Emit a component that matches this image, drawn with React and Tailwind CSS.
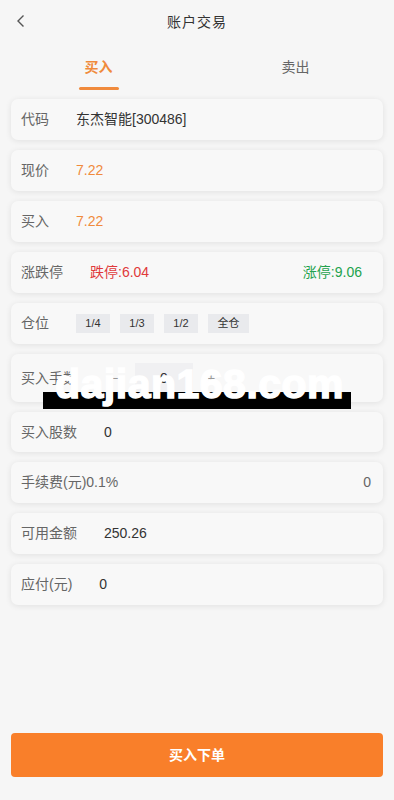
import React from "react";

const font = { fontFamily: '"Liberation Sans", "Noto Sans CJK SC", sans-serif' };

function Card({ children, className = "" }) {
  return (
    <div className={`flex items-center rounded-[7px] bg-[#f8f8f8] px-[10px] shadow-[0_1px_6px_rgba(0,0,0,0.09)] ${className}`}>
      {children}
    </div>
  );
}

function Label({ children, mr = true }) {
  return <span className={`text-[14px] text-[#666] ${mr ? "mr-[27px]" : ""}`}>{children}</span>;
}

export default function App() {
  return (
    <div style={font} className="relative flex min-h-[800px] w-[394px] flex-col bg-[#f6f6f6]">
      {/* header */}
      <div className="relative flex h-[44px] items-center justify-center">
        <svg className="absolute left-[15px] top-[14px]" width="12" height="14" viewBox="0 0 12 14">
          <path d="M8.5 1.5 L3 7 L8.5 12.5" fill="none" stroke="#555" strokeWidth="1.4" />
        </svg>
        <span className="text-[14px] tracking-[1px] text-[#333]">账户交易</span>
      </div>
      {/* tabs */}
      <div className="flex h-[47px]">
        <div className="flex flex-1 flex-col items-center">
          <span className="mt-[13px] text-[14px] font-bold text-[#f08a3c]">买入</span>
          <div className="mt-[9px] h-[3px] w-[40px] rounded-full bg-[#f08a3c]" />
        </div>
        <div className="flex flex-1 flex-col items-center">
          <span className="mt-[13px] text-[14px] text-[#666]">卖出</span>
        </div>
      </div>

      <div className="mt-[8px] flex flex-col gap-[10px] px-[11px]">
        <Card className="h-[41px]">
          <Label>代码</Label>
          <span className="text-[14px] text-[#333]">东杰智能[300486]</span>
        </Card>
        <Card className="h-[41px]">
          <Label>现价</Label>
          <span className="text-[14px] text-[#f08a3c]">7.22</span>
        </Card>
        <Card className="h-[41px]">
          <Label>买入</Label>
          <span className="text-[14px] text-[#f08a3c]">7.22</span>
        </Card>
        <Card className="h-[41px] pr-[21px]">
          <Label>涨跌停</Label>
          <span className="text-[14px] text-[#e0393b]">跌停:6.04</span>
          <span className="ml-auto text-[14px] text-[#23a24d]">涨停:9.06</span>
        </Card>
        <Card className="h-[41px]">
          <Label>仓位</Label>
          <div className="flex gap-[10px]">
            {["1/4", "1/3", "1/2", "全仓"].map((t) => (
              <span
                key={t}
                className={`flex h-[19px] items-center justify-center bg-[#e9eaed] text-[11px] text-[#333] ${t === "全仓" ? "w-[41px]" : "w-[34px]"}`}
              >
                {t}
              </span>
            ))}
          </div>
        </Card>
        <Card className="h-[48px]">
          <Label mr={false}>买入手数</Label>
          <div className="ml-[35px] flex items-center">
            <span className="w-[10px] text-[14px] text-[#999]">−</span>
            <div className="ml-[13px] flex h-[30px] w-[58px] items-center justify-center bg-[#f0f0f2] text-[14px] text-[#333]">0</div>
            <span className="ml-[14px] text-[14px] text-[#999]">+</span>
          </div>
        </Card>
        <Card className="h-[40px]">
          <Label>买入股数</Label>
          <span className="text-[14px] text-[#333]">0</span>
        </Card>
        <Card className="h-[41px] pr-[12px]">
          <Label mr={false}>手续费(元)0.1%</Label>
          <span className="ml-auto text-[14px] text-[#666]">0</span>
        </Card>
        <Card className="h-[41px]">
          <Label>可用金额</Label>
          <span className="text-[14px] text-[#333]">250.26</span>
        </Card>
        <Card className="h-[41px]">
          <Label>应付(元)</Label>
          <span className="text-[14px] text-[#333]">0</span>
        </Card>
      </div>

      <div className="mt-auto px-[11px] pb-[23px]">
        <button className="flex h-[44px] w-full items-center justify-center rounded-[4px] bg-[#f97f2a] text-[14px] font-bold text-white">
          买入下单
        </button>
      </div>

      {/* watermark */}
      <div className="absolute left-[43px] top-[392px] h-[17px] w-[308px] bg-black" />
      <div className="absolute left-[55px] top-[364px] text-[41px] font-bold leading-none tracking-[0.5px] text-white [-webkit-text-stroke:1.5px_white]">
        dajian168.com
      </div>
    </div>
  );
}
